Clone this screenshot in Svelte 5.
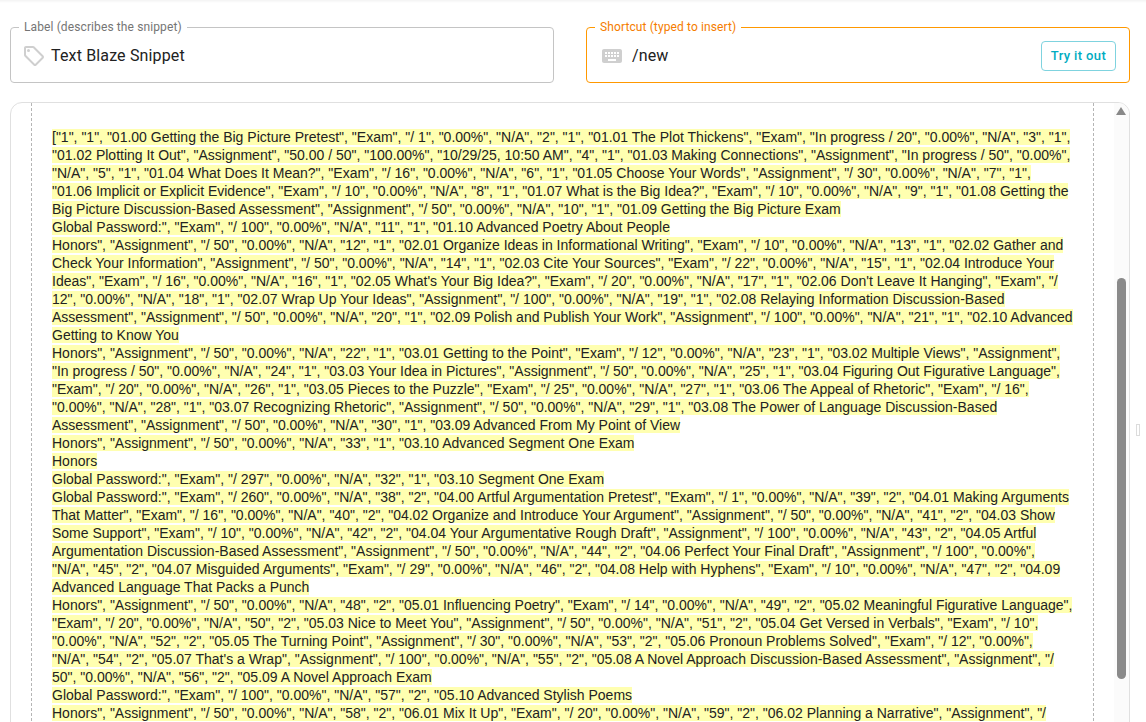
<script>
  const paragraphs = [
    `["1", "1", "01.00 Getting the Big Picture Pretest", "Exam", "/ 1", "0.00%", "N/A", "2", "1", "01.01 The Plot Thickens", "Exam", "In progress / 20", "0.00%", "N/A", "3", "1", "01.02 Plotting It Out", "Assignment", "50.00 / 50", "100.00%", "10/29/25, 10:50 AM", "4", "1", "01.03 Making Connections", "Assignment", "In progress / 50", "0.00%", "N/A", "5", "1", "01.04 What Does It Mean?", "Exam", "/ 16", "0.00%", "N/A", "6", "1", "01.05 Choose Your Words", "Assignment", "/ 30", "0.00%", "N/A", "7", "1", "01.06 Implicit or Explicit Evidence", "Exam", "/ 10", "0.00%", "N/A", "8", "1", "01.07 What is the Big Idea?", "Exam", "/ 10", "0.00%", "N/A", "9", "1", "01.08 Getting the Big Picture Discussion-Based Assessment", "Assignment", "/ 50", "0.00%", "N/A", "10", "1", "01.09 Getting the Big Picture Exam`,
    `Global Password:", "Exam", "/ 100", "0.00%", "N/A", "11", "1", "01.10 Advanced Poetry About People`,
    `Honors", "Assignment", "/ 50", "0.00%", "N/A", "12", "1", "02.01 Organize Ideas in Informational Writing", "Exam", "/ 10", "0.00%", "N/A", "13", "1", "02.02 Gather and Check Your Information", "Assignment", "/ 50", "0.00%", "N/A", "14", "1", "02.03 Cite Your Sources", "Exam", "/ 22", "0.00%", "N/A", "15", "1", "02.04 Introduce Your Ideas", "Exam", "/ 16", "0.00%", "N/A", "16", "1", "02.05 What's Your Big Idea?", "Exam", "/ 20", "0.00%", "N/A", "17", "1", "02.06 Don't Leave It Hanging", "Exam", "/ 12", "0.00%", "N/A", "18", "1", "02.07 Wrap Up Your Ideas", "Assignment", "/ 100", "0.00%", "N/A", "19", "1", "02.08 Relaying Information Discussion-Based Assessment", "Assignment", "/ 50", "0.00%", "N/A", "20", "1", "02.09 Polish and Publish Your Work", "Assignment", "/ 100", "0.00%", "N/A", "21", "1", "02.10 Advanced Getting to Know You`,
    `Honors", "Assignment", "/ 50", "0.00%", "N/A", "22", "1", "03.01 Getting to the Point", "Exam", "/ 12", "0.00%", "N/A", "23", "1", "03.02 Multiple Views", "Assignment", "In progress / 50", "0.00%", "N/A", "24", "1", "03.03 Your Idea in Pictures", "Assignment", "/ 50", "0.00%", "N/A", "25", "1", "03.04 Figuring Out Figurative Language", "Exam", "/ 20", "0.00%", "N/A", "26", "1", "03.05 Pieces to the Puzzle", "Exam", "/ 25", "0.00%", "N/A", "27", "1", "03.06 The Appeal of Rhetoric", "Exam", "/ 16", "0.00%", "N/A", "28", "1", "03.07 Recognizing Rhetoric", "Assignment", "/ 50", "0.00%", "N/A", "29", "1", "03.08 The Power of Language Discussion-Based Assessment", "Assignment", "/ 50", "0.00%", "N/A", "30", "1", "03.09 Advanced From My Point of View`,
    `Honors", "Assignment", "/ 50", "0.00%", "N/A", "33", "1", "03.10 Advanced Segment One Exam`,
    `Honors`,
    `Global Password:", "Exam", "/ 297", "0.00%", "N/A", "32", "1", "03.10 Segment One Exam`,
    `Global Password:", "Exam", "/ 260", "0.00%", "N/A", "38", "2", "04.00 Artful Argumentation Pretest", "Exam", "/ 1", "0.00%", "N/A", "39", "2", "04.01 Making Arguments That Matter", "Exam", "/ 16", "0.00%", "N/A", "40", "2", "04.02 Organize and Introduce Your Argument", "Assignment", "/ 50", "0.00%", "N/A", "41", "2", "04.03 Show Some Support", "Exam", "/ 10", "0.00%", "N/A", "42", "2", "04.04 Your Argumentative Rough Draft", "Assignment", "/ 100", "0.00%", "N/A", "43", "2", "04.05 Artful Argumentation Discussion-Based Assessment", "Assignment", "/ 50", "0.00%", "N/A", "44", "2", "04.06 Perfect Your Final Draft", "Assignment", "/ 100", "0.00%", "N/A", "45", "2", "04.07 Misguided Arguments", "Exam", "/ 29", "0.00%", "N/A", "46", "2", "04.08 Help with Hyphens", "Exam", "/ 10", "0.00%", "N/A", "47", "2", "04.09 Advanced Language That Packs a Punch`,
    `Honors", "Assignment", "/ 50", "0.00%", "N/A", "48", "2", "05.01 Influencing Poetry", "Exam", "/ 14", "0.00%", "N/A", "49", "2", "05.02 Meaningful Figurative Language", "Exam", "/ 20", "0.00%", "N/A", "50", "2", "05.03 Nice to Meet You", "Assignment", "/ 50", "0.00%", "N/A", "51", "2", "05.04 Get Versed in Verbals", "Exam", "/ 10", "0.00%", "N/A", "52", "2", "05.05 The Turning Point", "Assignment", "/ 30", "0.00%", "N/A", "53", "2", "05.06 Pronoun Problems Solved", "Exam", "/ 12", "0.00%", "N/A", "54", "2", "05.07 That's a Wrap", "Assignment", "/ 100", "0.00%", "N/A", "55", "2", "05.08 A Novel Approach Discussion-Based Assessment", "Assignment", "/ 50", "0.00%", "N/A", "56", "2", "05.09 A Novel Approach Exam`,
    `Global Password:", "Exam", "/ 100", "0.00%", "N/A", "57", "2", "05.10 Advanced Stylish Poems`,
    `Honors", "Assignment", "/ 50", "0.00%", "N/A", "58", "2", "06.01 Mix It Up", "Exam", "/ 20", "0.00%", "N/A", "59", "2", "06.02 Planning a Narrative", "Assignment", "/`
  ];
</script>

<div class="page">
  <div class="fields">
    <fieldset class="field">
      <legend>Label (describes the snippet)</legend>
      <svg class="icon" viewBox="0 0 24 24" aria-hidden="true">
        <path d="m21.41 11.58-9-9C12.05 2.22 11.55 2 11 2H4c-1.1 0-2 .9-2 2v7c0 .55.22 1.05.59 1.42l9 9c.36.36.86.58 1.41.58s1.05-.22 1.41-.59l7-7c.37-.36.59-.86.59-1.41s-.23-1.06-.59-1.42zM13 20.01 4 11V4h7v-.01l9 9-7 7.02z" />
        <circle cx="6.5" cy="6.5" r="1.5" />
      </svg>
      <span class="value">Text Blaze Snippet</span>
    </fieldset>
    <fieldset class="field active">
      <legend>Shortcut (typed to insert)</legend>
      <svg class="icon" viewBox="0 0 24 24" aria-hidden="true">
        <path d="M20 5H4c-1.1 0-1.99.9-1.99 2L2 17c0 1.1.9 2 2 2h16c1.1 0 2-.9 2-2V7c0-1.1-.9-2-2-2zm-9 3h2v2h-2V8zm0 3h2v2h-2v-2zM8 8h2v2H8V8zm0 3h2v2H8v-2zm-1 2H5v-2h2v2zm0-3H5V8h2v2zm9 7H8v-2h8v2zm0-4h-2v-2h2v2zm0-3h-2V8h2v2zm3 3h-2v-2h2v2zm0-3h-2V8h2v2z" />
      </svg>
      <span class="value">/new</span>
      <button type="button" class="try">Try it out</button>
    </fieldset>
  </div>

  <div class="editor">
    <div class="sheet">
      {#each paragraphs as text}
        <p><span class="mark">{text}</span></p>
      {/each}
    </div>
    <div class="scrollbar">
      <div class="arrow"></div>
      <div class="thumb"></div>
    </div>
  </div>
  <div class="grip"></div>
</div>

<style>
  :global(html), :global(body) {
    margin: 0;
    height: 100%;
    overflow: hidden;
    background: #fff;
  }
  .page {
    position: relative;
    height: 722px;
    overflow: hidden;
    box-sizing: border-box;
    padding: 0 16px 0 10px;
    font-family: Roboto, "Liberation Sans", sans-serif;
    background: linear-gradient(#f3f3f3, #fff 3px);
  }
  .fields {
    display: grid;
    grid-template-columns: 544px 544px;
    column-gap: 32px;
    padding-top: 19px;
    margin-bottom: 19px;
  }
  .field {
    display: flex;
    align-items: center;
    box-sizing: border-box;
    height: 64px;
    margin: 0;
    padding: 0 13px 6px 11px;
    border: 1px solid #c4c4c4;
    border-radius: 4px;
    min-width: 0;
  }
  .field legend {
    margin-left: -3px;
    padding: 0 5px;
    font-size: 12px;
    line-height: 16px;
    letter-spacing: 0.11px;
    color: #757575;
  }
  .field.active {
    border-color: #ff9800;
  }
  .field.active legend {
    color: #f57c00;
  }
  .icon {
    width: 24px;
    height: 24px;
    fill: #cfcfcf;
    flex: none;
  }
  .value {
    margin-left: 5px;
    font-size: 16px;
    letter-spacing: 0.15px;
    color: #212121;
  }
  .active .icon {
    margin-left: 2px;
  }
  .active .value {
    margin-left: 8px;
  }
  .try {
    margin-left: auto;
    box-sizing: border-box;
    width: 75px;
    height: 30px;
    padding: 0;
    border: 1px solid #7fd3df;
    border-radius: 4px;
    background: #fff;
    color: #00acc1;
    font-family: Roboto, "Liberation Sans", sans-serif;
    font-size: 13px;
    font-weight: 500;
    letter-spacing: 0.37px;
  }
  .editor {
    display: grid;
    grid-template-columns: 20px 1fr 15px;
    box-sizing: border-box;
    width: 1120px;
    height: 760px;
    border: 1px solid #e0e0e0;
    border-radius: 12px;
    overflow: hidden;
  }
  .sheet {
    grid-column: 2;
    box-sizing: border-box;
    width: 1063px;
    padding: 25px 20px 0;
    border-left: 1px dashed #b5b5b5;
    border-right: 1px dashed #b5b5b5;
    font-family: "Liberation Sans", Arial, sans-serif;
    font-size: 14px;
    line-height: 18px;
    color: #222;
  }
  .sheet p {
    margin: 0;
  }
  .mark {
    background: #ffffb0;
  }
  .scrollbar {
    grid-column: 3;
    position: relative;
    background: #fbfbfb;
  }
  .arrow {
    position: absolute;
    top: 4px;
    left: 2px;
    width: 0;
    height: 0;
    border-left: 5.5px solid transparent;
    border-right: 5.5px solid transparent;
    border-bottom: 8px solid #888;
  }
  .thumb {
    position: absolute;
    top: 175px;
    left: 3px;
    width: 9px;
    height: 401px;
    border-radius: 5px;
    background: #8a8a8a;
  }
  .grip {
    position: absolute;
    left: 1136px;
    top: 424px;
    width: 2px;
    height: 10px;
    border: 1px solid #dcdcdc;
    background: #fff;
  }
</style>
